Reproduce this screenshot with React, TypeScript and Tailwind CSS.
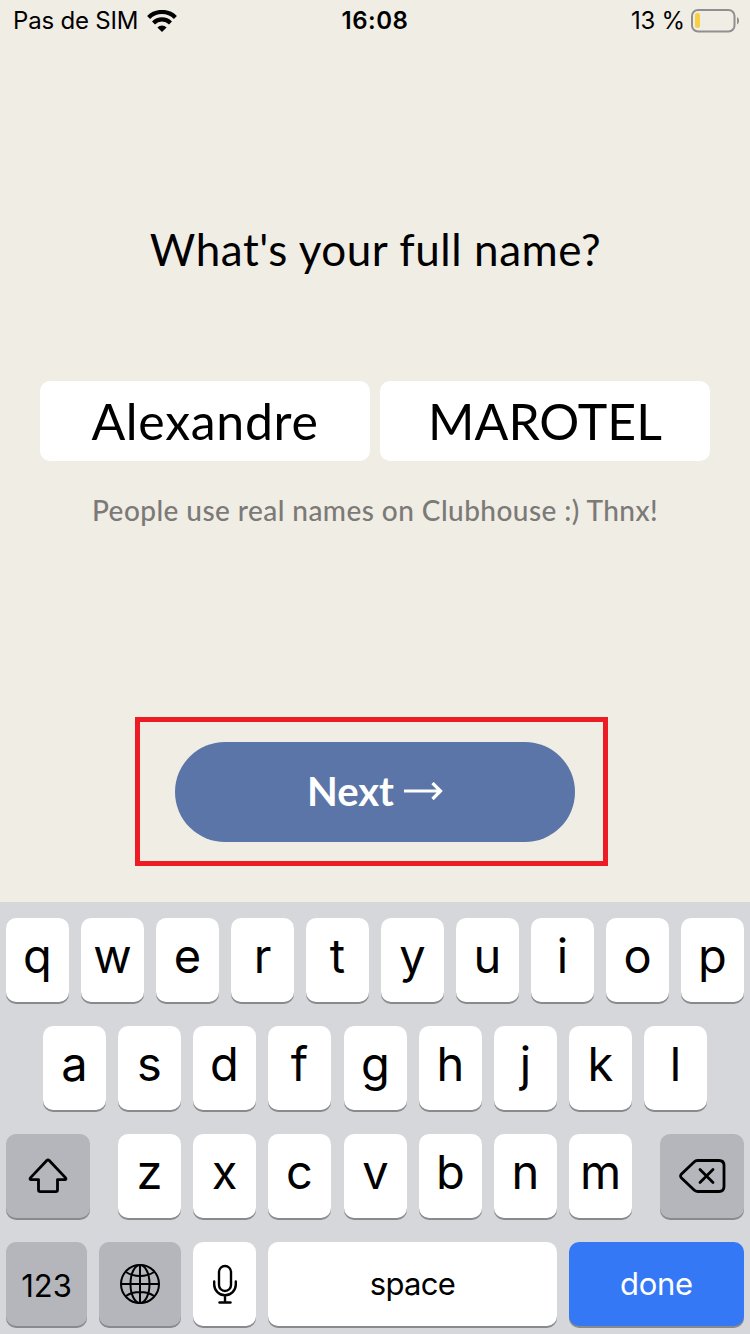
import React from 'react';
import clsx from 'clsx';

interface KeyProps {
  children: React.ReactNode;
  className?: string;
  label?: string;
}

const Key: React.FC<KeyProps> = ({ children, className, label }) => (
  <button
    aria-label={label}
    className={clsx(
      'flex h-[84px] shrink-0 items-center justify-center rounded-[10px] shadow-[0_2px_0_#898a8d]',
      className
    )}
  >
    {children}
  </button>
);

const LetterKey: React.FC<{ letter: string }> = ({ letter }) => (
  <Key className={clsx('w-[63px] bg-white pb-2.5 text-[47px] leading-none font-normal', (letter === 'g' || letter === 'v') && 'ml-px')}>
    {letter}
  </Key>
);

const WifiIcon: React.FC = () => (
  <svg width="30" height="22" viewBox="0 0 30 22" fill="none" stroke="#000" strokeWidth="4.200">
    <path d="M1.600 7.400a19.200 19.200 0 0 1 26.800 0" />
    <path d="M6.500 12.900a12.200 12.200 0 0 1 17 0" />
    <path d="M15 22l-4.600-4.600a6.600 6.600 0 0 1 9.200 0z" fill="#000" stroke="none" />
  </svg>
);

const BatteryIcon: React.FC = () => (
  <svg width="49" height="24" viewBox="0 0 49 24" fill="none">
    <rect x="1" y="1" width="42.500" height="21.500" rx="6" stroke="#8f8f8f" strokeWidth="2" />
    <rect x="4" y="4" width="5" height="15" rx="2.200" fill="#f7ce46" />
    <path d="M46 8c2.700 1.300 2.700 6.200 0 7.500z" fill="#8f8f8f" />
  </svg>
);

const ShiftIcon: React.FC = () => (
  <svg width="40" height="36" viewBox="0 0 40 36" fill="none" stroke="#000" strokeWidth="2.800" strokeLinejoin="round">
    <path d="M18.800 2.500L2.600 19.600c-1 1.100-.6 2 .6 2h7.300v10.200c0 1.300.6 1.900 1.900 1.900h15.200c1.300 0 1.900-.6 1.900-1.900V21.600h7.300c1.200 0 1.600-.9.6-2L21.200 2.500c-.8-.8-1.600-.8-2.400 0z" />
  </svg>
);

const BackspaceIcon: React.FC = () => (
  <svg width="48" height="36" viewBox="0 0 48 36" fill="none" stroke="#000" strokeWidth="2.800" strokeLinecap="round" strokeLinejoin="round">
    <path d="M19.500 2.500H41c3.400 0 5 1.600 5 5v21c0 3.400-1.600 5-5 5H19.500c-1.400 0-2.400-.4-3.400-1.400L3.500 20c-1.300-1.300-1.300-2.700 0-4L16.100 3.900c1-1 2-1.400 3.400-1.400z" />
    <path d="M22 11.500l13 13M35 11.500l-13 13" />
  </svg>
);

const GlobeIcon: React.FC = () => (
  <svg width="40" height="40" viewBox="0 0 40 40" fill="none" stroke="#000" strokeWidth="2">
    <circle cx="20" cy="20" r="19" />
    <ellipse cx="20" cy="20" rx="9.500" ry="19" />
    <path d="M20 1v38M1 20h38M6 8c7.500 5.300 20.500 5.300 28 0M6 32c7.500-5.300 20.500-5.300 28 0" />
  </svg>
);

const MicIcon: React.FC = () => (
  <svg width="26" height="40" viewBox="0 0 26 40" fill="none" stroke="#000" strokeWidth="2.400" strokeLinecap="round">
    <rect x="7" y="2" width="12" height="25" rx="6" />
    <path d="M2.200 17.500v3a10.800 10.800 0 0 0 21.600 0v-3M13 31.500v6" />
    <path d="M7.500 38.500h11" />
  </svg>
);

const topRow = ['q', 'w', 'e', 'r', 't', 'y', 'u', 'i', 'o', 'p'];
const middleRow = ['a', 's', 'd', 'f', 'g', 'h', 'j', 'k', 'l'];
const bottomRow = ['z', 'x', 'c', 'v', 'b', 'n', 'm'];

const StatusBar: React.FC = () => (
  <header className="grid h-[41px] grid-cols-3 items-center pr-[10px] pl-[13px] text-2xl leading-none">
    <div className="flex items-center gap-[9px]">
      <span className="tracking-[-0.2px] whitespace-nowrap">Pas de SIM</span>
      <WifiIcon />
    </div>
    <span className="pr-[3px] text-center font-semibold tracking-[0.5px]">16:08</span>
    <div className="flex items-center justify-end gap-1.5">
      <span className="tracking-[-0.2px] whitespace-nowrap">13 %</span>
      <BatteryIcon />
    </div>
  </header>
);

const Keyboard: React.FC = () => (
  <div className="flex h-[432px] flex-col gap-6 bg-[#d6d7db] px-1.5 pt-4">
    <div className="flex gap-3">
      {topRow.map((letter) => (
        <LetterKey key={letter} letter={letter} />
      ))}
    </div>
    <div className="flex gap-3 pl-[37px]">
      {middleRow.map((letter) => (
        <LetterKey key={letter} letter={letter} />
      ))}
    </div>
    <div className="flex justify-between">
      <Key label="shift" className="w-[84px] bg-[#b4b6bc]">
        <ShiftIcon />
      </Key>
      <div className="flex gap-3">
        {bottomRow.map((letter) => (
          <LetterKey key={letter} letter={letter} />
        ))}
      </div>
      <Key label="delete" className="w-[84px] bg-[#b4b6bc]">
        <BackspaceIcon />
      </Key>
    </div>
    <div className="flex gap-3 text-[31px] leading-none">
      <Key className="w-[81px] bg-[#b4b6bc] pt-0.5">123</Key>
      <Key label="globe" className="w-[82px] bg-[#b4b6bc]">
        <GlobeIcon />
      </Key>
      <Key label="dictate" className="w-[63px] bg-white">
        <MicIcon />
      </Key>
      <Key className="w-[289px] bg-white pb-0.5 tracking-[-0.7px]">space</Key>
      <Key className="w-[175px] bg-[#3478f6] pb-0.5 tracking-[-0.3px] text-white">done</Key>
    </div>
  </div>
);

const App: React.FC = () => {
  return (
    <div className="flex h-[1334px] w-[750px] flex-col overflow-hidden bg-[#f0ede5] font-['Inter',sans-serif] text-black">
      <StatusBar />
      <main className="flex flex-1 flex-col items-center font-['Lato',sans-serif]">
        <h1 className="mt-[180px] pl-px text-[44px] leading-[56px] tracking-[0.55px] whitespace-nowrap">What's your full name?</h1>
        <div className="mt-[103px] flex gap-2.5 pt-px text-[50px] leading-[80px]">
          <div className="h-20 w-[330px] rounded-[10px] bg-white text-center tracking-[0.7px]">Alexandre</div>
          <div className="h-20 w-[330px] rounded-[10px] bg-white text-center">MAROTEL</div>
        </div>
        <p className="mt-[29px] mb-px text-[28px] leading-10 font-medium tracking-[0.44px] whitespace-nowrap text-[#7b7a77]">
          People use real names on Clubhouse :) Thnx!
        </p>
        <div className="mt-[186px] mr-[7px] flex h-[149px] w-[473px] border-5 border-[#ed1c24] pt-5 pl-[35px]">
          <button className="flex h-[100px] w-[400px] items-center justify-center gap-2.5 rounded-full bg-[#5b75a8] text-[40px] leading-none font-bold text-white">
            <span className="pb-0.5">Next</span>
            <svg width="39" height="20" viewBox="0 0 39 20" fill="none" stroke="currentColor" strokeWidth="3.200">
              <path d="M0 9h36M28.500 1l8 8-8 8" />
            </svg>
          </button>
        </div>
      </main>
      <Keyboard />
    </div>
  );
};

export default App;
